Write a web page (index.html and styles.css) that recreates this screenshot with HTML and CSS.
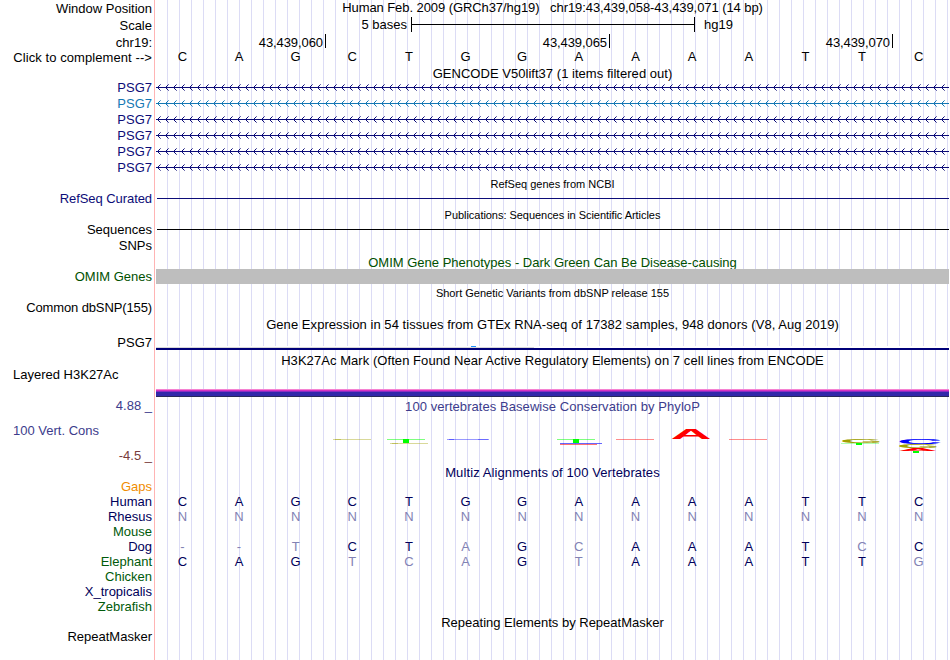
FILE: index.html
```html
<!DOCTYPE html>
<html lang="en">
<head>
  <meta charset="UTF-8">
  <title>Human chr19:43,439,058-43,439,071</title>
  <link rel="stylesheet" href="styles.css">
</head>
<body>

<div class="browser">

  <!-- ruler -->
  <div class="row h17 top">
    <div class="label">Window Position</div>
    <div class="data title position">Human Feb. 2009 (GRCh37/hg19)   chr19:43,439,058-43,439,071 (14 bp)</div>
  </div>
  <div class="row h17">
    <div class="label">Scale</div>
    <div class="data scale"><span class="scale-text">5 bases</span><span class="scale-bar"></span><span>hg19</span></div>
  </div>
  <div class="row h15">
    <div class="label">chr19:</div>
    <div class="data ticks"><span>43,439,060</span><span>43,439,065</span><span>43,439,070</span></div>
  </div>
  <div class="row">
    <div class="label complement">Click to complement --&gt;</div>
    <div class="data bases raised"><b>C</b><b>A</b><b>G</b><b>C</b><b>T</b><b>G</b><b>G</b><b>A</b><b>A</b><b>A</b><b>A</b><b>T</b><b>T</b><b>C</b></div>
  </div>

  <!-- GENCODE -->
  <div class="row h14"><div class="label"></div><div class="data title gencode">GENCODE V50lift37 (1 items filtered out)</div></div>
  <div class="row navy"><div class="label">PSG7</div><svg class="intron"><rect width="793" height="16" fill="url(#arrow-navy)"/></svg></div>
  <div class="row sky"><div class="label">PSG7</div><svg class="intron"><rect width="793" height="16" fill="url(#arrow-sky)"/></svg></div>
  <div class="row navy"><div class="label">PSG7</div><svg class="intron"><rect width="793" height="16" fill="url(#arrow-navy)"/></svg></div>
  <div class="row navy"><div class="label">PSG7</div><svg class="intron"><rect width="793" height="16" fill="url(#arrow-navy)"/></svg></div>
  <div class="row navy"><div class="label">PSG7</div><svg class="intron"><rect width="793" height="16" fill="url(#arrow-navy)"/></svg></div>
  <div class="row navy"><div class="label">PSG7</div><svg class="intron"><rect width="793" height="16" fill="url(#arrow-navy)"/></svg></div>

  <!-- RefSeq -->
  <div class="row h15"><div class="label"></div><div class="data title small refseq">RefSeq genes from NCBI</div></div>
  <div class="row navy"><div class="label curated">RefSeq Curated</div><div class="data"><div class="line"></div></div></div>

  <!-- Publications -->
  <div class="row h15"><div class="label"></div><div class="data title small pubs">Publications: Sequences in Scientific Articles</div></div>
  <div class="row"><div class="label">Sequences</div><div class="data"><div class="line"></div></div></div>
  <div class="row h17"><div class="label">SNPs</div><div class="data"></div></div>

  <!-- OMIM -->
  <div class="row h14 green"><div class="label"></div><div class="data title omim">OMIM Gene Phenotypes - Dark Green Can Be Disease-causing</div></div>
  <div class="row green"><div class="label">OMIM Genes</div><div class="data"><div class="omim-bar"></div></div></div>

  <!-- dbSNP -->
  <div class="row h15"><div class="label"></div><div class="data title small dbsnp">Short Genetic Variants from dbSNP release 155</div></div>
  <div class="row h17"><div class="label common">Common dbSNP(155)</div><div class="data"></div></div>

  <!-- GTEx -->
  <div class="row h18"><div class="label"></div><div class="data title gtex">Gene Expression in 54 tissues from GTEx RNA-seq of 17382 samples, 948 donors (V8, Aug 2019)</div></div>
  <div class="row h18">
    <div class="label">PSG7</div>
    <div class="data">
      <svg class="expression" width="793" height="4">
        <rect width="793" height="4" fill="#fff"/>
        <rect y="1" width="378" height="1" fill="#d8d8d8"/>
        <rect x="315" width="5" height="1" fill="#1e90ff"/>
        <rect y="2" width="793" height="2" fill="#000078"/>
      </svg>
    </div>
  </div>

  <!-- H3K27Ac -->
  <div class="row h14"><div class="label"></div><div class="data title h3k">H3K27Ac Mark (Often Found Near Active Regulatory Elements) on 7 cell lines from ENCODE</div></div>
  <div class="row h32">
    <div class="label left">Layered H3K27Ac</div>
    <div class="data"><div class="layers"></div></div>
  </div>

  <!-- Conservation -->
  <div class="row h24 cons">
    <div class="label raised">4.88 _</div>
    <div class="data title phylop">100 vertebrates Basewise Conservation by PhyloP</div>
  </div>
  <div class="row h25 cons">
    <div class="label left">100 Vert. Cons</div>
    <div class="data">
      <svg class="logo" width="793" height="37" viewBox="156 423 793 37">
        <g class="flat">
          <rect x="333" y="439" width="38" height="1" fill="#a0a000" opacity=".4"/>
          <rect x="335" y="439" width="6" height="1" fill="#a0a000" opacity=".4"/>
          <rect x="387" y="439" width="38" height="1" fill="#00ff00" opacity=".5"/>
          <rect x="403" y="439" width="6" height="4" fill="#00ff00"/>
          <rect x="390" y="443" width="38" height="1" fill="#a0a000" opacity=".4"/>
          <rect x="392" y="443" width="6" height="1" fill="#a0a000" opacity=".4"/>
          <rect x="447" y="439" width="42" height="1" fill="#0000ff" opacity=".4"/>
          <rect x="449" y="439" width="5" height="1" fill="#0000ff" opacity=".4"/>
          <rect x="478" y="439" width="10" height="1" fill="#0000ff" opacity=".3"/>
          <rect x="557" y="439" width="38" height="1" fill="#00ff00" opacity=".5"/>
          <rect x="573" y="439" width="6" height="4" fill="#00ff00"/>
          <rect x="560" y="443" width="42" height="1" fill="#0000ff" opacity=".6"/>
          <rect x="560" y="444" width="37" height="1" fill="#ff0000" opacity=".55"/>
          <rect x="616" y="439" width="38" height="1" fill="#ff0000" opacity=".45"/>
          <rect x="729" y="439" width="38" height="1" fill="#ff0000" opacity=".45"/>
          <rect x="841" y="443" width="38" height="1" fill="#00ff00" opacity=".3"/>
          <rect x="856" y="443" width="6" height="2" fill="#00ff00"/>
          <rect x="913" y="451" width="6" height="2" fill="#00ff00"/>
        </g>
        <text transform="translate(670.5 439) scale(5.7 1.45)" fill="#f00">A</text>
        <text transform="translate(840 443) scale(5.5 .6)" fill="#a0a000">G</text>
        <text transform="translate(897 444) scale(6.3 .72)" fill="#00f">C</text>
        <text transform="translate(897 448) scale(5.5 .6)" fill="#a0a000">G</text>
        <text transform="translate(898 451) scale(5.5 .42)" fill="#f00">A</text>
      </svg>
    </div>
  </div>
  <div class="row h17 lower"><div class="label">-4.5 _</div><div class="data"></div></div>

  <!-- Multiz -->
  <div class="row h14 primate"><div class="label"></div><div class="data title multiz">Multiz Alignments of 100 Vertebrates</div></div>
  <div class="row h15 gaps"><div class="label">Gaps</div><div class="data"></div></div>
  <div class="row h15 primate">
    <div class="label">Human</div>
    <div class="data bases"><b>C</b><b>A</b><b>G</b><b>C</b><b>T</b><b>G</b><b>G</b><b>A</b><b>A</b><b>A</b><b>A</b><b>T</b><b>T</b><b>C</b></div>
  </div>
  <div class="row h15 primate">
    <div class="label">Rhesus</div>
    <div class="data bases"><i>N</i><i>N</i><i>N</i><i>N</i><i>N</i><i>N</i><i>N</i><i>N</i><i>N</i><i>N</i><i>N</i><i>N</i><i>N</i><i>N</i></div>
  </div>
  <div class="row h15 species"><div class="label">Mouse</div><div class="data"></div></div>
  <div class="row h15 primate">
    <div class="label">Dog</div>
    <div class="data bases"><i>-</i><i>-</i><i>T</i><b>C</b><b>T</b><i>A</i><b>G</b><i>C</i><b>A</b><b>A</b><b>A</b><b>T</b><i>C</i><b>C</b></div>
  </div>
  <div class="row h15 species">
    <div class="label">Elephant</div>
    <div class="data bases primate"><b>C</b><b>A</b><b>G</b><i>T</i><i>C</i><i>A</i><b>G</b><i>T</i><b>A</b><b>A</b><b>A</b><b>T</b><b>T</b><i>G</i></div>
  </div>
  <div class="row h15 species"><div class="label">Chicken</div><div class="data"></div></div>
  <div class="row h15 primate"><div class="label">X_tropicalis</div><div class="data"></div></div>
  <div class="row species"><div class="label">Zebrafish</div><div class="data"></div></div>

  <!-- RepeatMasker -->
  <div class="row h14"><div class="label"></div><div class="data title repeat">Repeating Elements by RepeatMasker</div></div>
  <div class="row"><div class="label">RepeatMasker</div><div class="data"></div></div>

</div>

<!-- strand arrows, one every 8px -->
<svg class="defs" width="0" height="0">
  <defs>
    <pattern id="arrow-navy" width="8" height="16" patternUnits="userSpaceOnUse">
      <g stroke="#0c0c78" shape-rendering="crispEdges">
        <path d="M0 7.5H8M2 6.5h1M3 5.5h1M2 8.5h1M3 9.5h1"/>
        <path d="M4 4.5h1M4 10.5h1" opacity=".6"/>
      </g>
    </pattern>
    <pattern id="arrow-sky" width="8" height="16" patternUnits="userSpaceOnUse">
      <g stroke="#1478b4" shape-rendering="crispEdges">
        <path d="M0 7.5H8M2 6.5h1M3 5.5h1M2 8.5h1M3 9.5h1"/>
        <path d="M4 4.5h1M4 10.5h1" opacity=".6"/>
      </g>
    </pattern>
  </defs>
</svg>

</body>
</html>
```
FILE: styles.css
```css
body {
  margin: 0;
  background: #fff;
  color: #000;
  font-family: "Liberation Sans", Arial, sans-serif;
  font-size: 13px;
  overflow: hidden;
}

.browser {
  width: 949px;
  height: 659px;
  padding-top: 1px;
  background:
    linear-gradient(#ffb4b4, #ffb4b4) 154px 0 / 1px 100% no-repeat,
    repeating-linear-gradient(to right, #dcdcf5 0, #dcdcf5 1px, transparent 1px, transparent 12px) 167px 0 / 782px 100% no-repeat;
}

.row {
  display: flex;
  height: 16px;
  line-height: 16px;
  white-space: nowrap;
}

.h14 { height: 14px; }
.h15 { height: 15px; }
.h17 { height: 17px; }
.h18 { height: 18px; }
.h24 { height: 24px; }
.h25 { height: 25px; }
.h32 { height: 32px; }

.label {
  flex: none;
  box-sizing: border-box;
  width: 152px;
  margin-right: 4px;
  text-align: right;
}

.label.left {
  padding-left: 13px;
  text-align: left;
}

.data {
  width: 793px;
}

.title {
  text-align: center;
}

.small {
  font-size: 11px;
}

.raised, .position, .scale, .ticks {
  line-height: 14px;
}

/* spacing of the longer texts */
.position { white-space: pre; letter-spacing: -0.075px; }
.complement { letter-spacing: 0.08px; }
.curated { letter-spacing: -0.07px; }
.common { letter-spacing: -0.12px; }
.pubs { letter-spacing: -0.04px; }
.gencode { letter-spacing: 0.03px; }
.gtex, .h3k, .phylop { letter-spacing: 0.06px; }
.multiz { letter-spacing: 0.1px; }

/* track colors */
.navy { color: #0c0c78; }
.sky { color: #1478b4; }
.green { color: #005000; }
.cons { color: #3c3c8c; }
.lower { color: #783c3c; }
.gaps { color: #f08c00; }
.primate { color: #00005a; }
.species { color: #005a0a; }

/* ruler */
.scale {
  display: flex;
}

.scale-text {
  width: 251px;
  text-align: right;
}

.scale-bar {
  box-sizing: border-box;
  width: 284px;
  height: 15px;
  margin: -1px 9px 0 4px;
  border: solid #000;
  border-width: 0 1px;
  background: linear-gradient(#000, #000) 0 7px / 100% 1px no-repeat;
}

.ticks {
  display: flex;
}

.ticks span {
  box-sizing: border-box;
  width: 284px;
  height: 14px;
  margin-top: -1px;
  padding: 2px 2px 0 0;
  border-right: 1px solid #000;
  letter-spacing: -0.08px;
  text-align: right;
}

.ticks span:first-child { width: 170px; }
.ticks span:last-child { width: 283px; }

.bases {
  display: grid;
  grid-template-columns: repeat(14, 1fr);
  margin-left: -2px;
  text-align: center;
}

.bases b, .bases i {
  font-style: normal;
  font-weight: normal;
}

.bases i {
  color: #8282b4;
}

/* track items */
.intron {
  width: 793px;
  height: 16px;
}

.line {
  height: 1px;
  margin: 7px 0 0 1px;
  background: currentColor;
}

.omim-bar {
  height: 15px;
  background: #bebebe;
}

.expression {
  display: block;
  margin-top: 11px;
}

.layers {
  height: 8px;
  margin-top: 22px;
  background: linear-gradient(#f582d2 1px, #d732c3 1px 2px, #8c2dc3 2px 3px, #3228aa 3px 7px, #28285a 7px);
}

.logo {
  display: block;
  overflow: visible;
  font-size: 10px;
  font-weight: bold;
}

.defs {
  display: block;
}
```
